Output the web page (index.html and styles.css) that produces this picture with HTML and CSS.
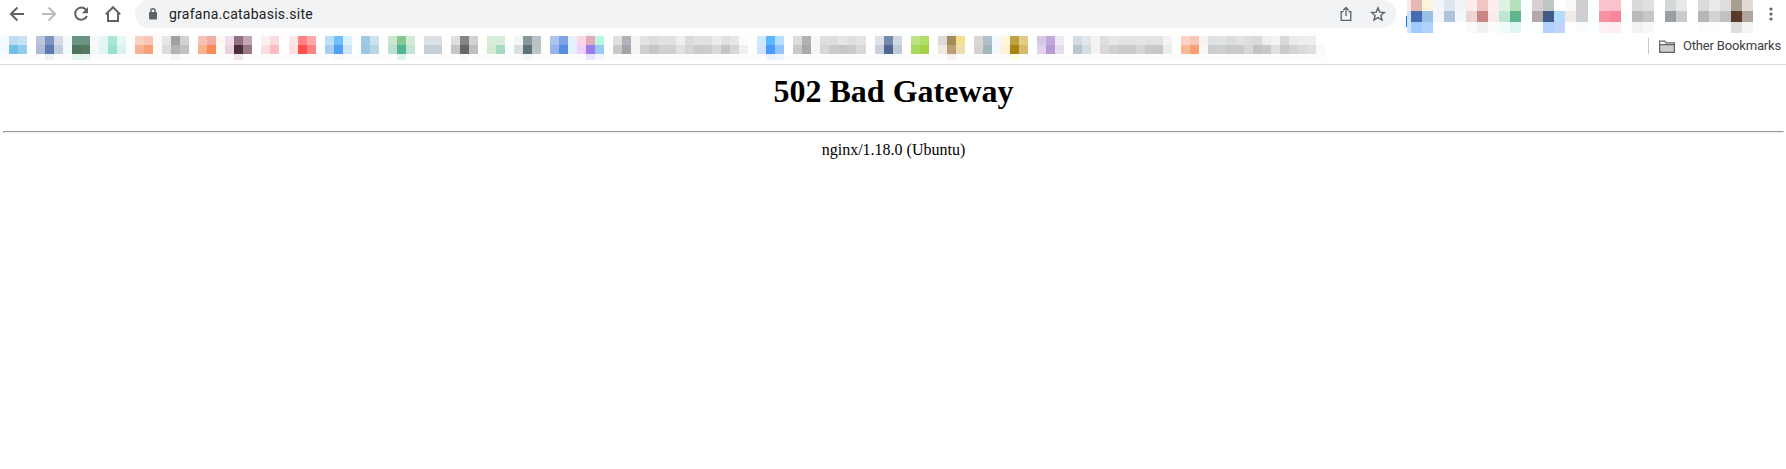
FILE: index.html
```html
<!DOCTYPE html>
<html lang="en">
<head>
<meta charset="utf-8">
<title>502 Bad Gateway</title>
<link rel="stylesheet" href="styles.css">
</head>
<body>
<header class="browser">
  <div class="toolbar">
    <nav class="nav">
      <svg class="icon" viewBox="0 0 20 20"><path d="M17 10H4.2M10.4 3.5L3.9 10l6.5 6.5"/></svg>
      <svg class="icon icon-disabled" viewBox="0 0 20 20"><path d="M3 10h12.8M9.6 3.5l6.5 6.5-6.5 6.5"/></svg>
      <svg class="icon" viewBox="0 0 20 20"><path d="M14.9 5.6A6.1 6.1 0 1 0 15.9 12"/><path class="solid" d="M17 3v6.2h-6.2z"/></svg>
      <svg class="icon" viewBox="0 0 20 20"><path d="M2.8 10.4L10 3.2l7.200 7.200M5 9v8h10V9"/></svg>
    </nav>
    <div class="omnibox">
      <svg class="lock" viewBox="0 0 8 12"><rect x="0" y="4" width="8" height="7.500" rx="1"/><path d="M1.900 4.500V2.900a2.100 2.100 0 0 1 4.200 0v1.600"/></svg>
      <span class="url">grafana.catabasis.site</span>
      <svg class="share" viewBox="0 0 12 16"><path d="M3.500 5.700H1.200v8.600h9.600V5.700H8.500M6 10V1.700M3.300 4.200L6 1.500l2.700 2.700"/></svg>
      <svg class="star" viewBox="0 0 16 16"><path d="M8 1.900l1.800 4.200 4.600.4-3.500 3 1.100 4.500L8 11.600 4 14l1.100-4.500-3.500-3 4.600-.4z"/></svg>
    </div>
    <div class="edge"></div>
    <div class="mosaic mosaic-tools" id="tools"></div>
    <svg class="menu" viewBox="0 0 4 14"><circle cx="2" cy="2" r="1.600"/><circle cx="2" cy="7" r="1.600"/><circle cx="2" cy="12" r="1.600"/></svg>
  </div>
  <div class="bookmarks">
    <div class="mosaic mosaic-marks" id="marks"></div>
    <div class="other">
      <svg class="folder" viewBox="0 0 16 13"><path d="M.6 12V1.100h5l1.300 1.700h8.500V12q0 .4-.4.4H1q-.4 0-.4-.4z"/><path class="front" d="M.6 4.600h14.800V12q0 .4-.4.400H1q-.4 0-.4-.4z"/></svg>
      <span>Other Bookmarks</span>
    </div>
  </div>
</header>
<main class="page">
  <h1>502 Bad Gateway</h1>
  <hr>
  <p>nginx/1.18.0 (Ubuntu)</p>
</main>
<script src="mosaic.js"></script>
</body>
</html>
```
FILE: styles.css
```css
body { margin: 0; background: #fff; }
.toolbar { display: flex; height: 33px; align-items: flex-start; }
.nav { display: flex; gap: 12px; padding: 4px 0 0 7px; width: 128px; box-sizing: border-box; }
.icon { width: 20px; height: 20px; flex: none; fill: none; stroke: #5f6368; stroke-width: 2; }
.icon-disabled { stroke: #babcbe; }
.icon .solid { fill: #5f6368; stroke: none; }
.omnibox { display: flex; align-items: center; box-sizing: border-box; width: 1261px; height: 28px; margin-left: 7px; padding: 0 10px 0 14px; border-radius: 14px; background: #f1f3f4; }
.lock { width: 8px; height: 12px; fill: #5f6368; }
.lock path { fill: none; stroke: #5f6368; stroke-width: 1.400; }
.url { margin-left: 12px; flex: 1; font: 14px/28px Roboto, sans-serif; letter-spacing: .26px; color: #202124; }
.share { width: 12px; height: 16px; margin-right: 18px; fill: none; stroke: #5f6368; stroke-width: 1.300; }
.star { width: 16px; height: 16px; fill: none; stroke: #5f6368; stroke-width: 1.400; }
.edge { flex: none; width: 1px; height: 11px; margin: 16px 0 0 10px; background: #1a73e8; }
.mosaic { display: grid; flex: none; }
.mosaic-tools { width: 346px; grid-template-columns: 4px repeat(31, 11.040px); grid-template-rows: repeat(3, 11px); }
.mosaic-marks { width: 1360px; grid-template-columns: repeat(147, 9.026px); grid-template-rows: 3px 9px 9px 6px; }
.menu { width: 4px; height: 14px; margin: 7px 0 0 16px; fill: #5f6368; }
.bookmarks { display: flex; justify-content: space-between; height: 31px; border-bottom: 1px solid #d8d9db; }
.other { display: flex; align-items: center; height: 16px; margin: 5px 5px 0 0; padding-left: 10px; border-left: 1px solid #c8cacd; font: 13px/16px Roboto, sans-serif; letter-spacing: -.17px; color: #3c4043; }
.folder { width: 16px; height: 13px; margin-right: 8px; fill: #fff; stroke: #5f6368; stroke-width: 1.200; }
.folder .front { fill: #ccc; }
.page { padding: 0 2px 0 3px; font-family: "Liberation Serif", serif; text-align: center; color: #000; }
.page h1 { margin: 8px 0 21px; font-size: 32px; line-height: 37px; }
.page hr { margin: 0; }
.page p { margin: 7px 0 0; font-size: 16px; line-height: 20px; }
```
FILE: mosaic.js
```js
// Each column lists its colours from top to bottom; "-" leaves the column empty.
const toolColumns = `fbe8ee/cfe0f9/cfe3fc e6b7b3/456bb5/9fcaff fbf5de/9bbfe2/b0d0ff f2f6fb/f2f6fb/ffffff dde5ee/b2c4da/ffffff eef3f8/f2f8fc/ffffff fdecec/eed5d4/fbfbfb f0c6c5/ca8684/f2f0f0 fdecec/fbeaec/fcfcfc ddf2e3/bde7d5/f1fbf8 b6dfbc/60b68c/e0f4f2 fbffff/fbffff/ffffff dacfd4/b2a9a8/fcffff bdc8c7/405b89/b0d0ff ffffff/b4dcff/bfd3fb faf8f8/f1ebe6/ffffff cfcdcf/cfcfd2/f8fcff faffff/faffff/faffff fbc2cc/f792a3/fff0f3 fbc2cc/f6869b/ffedf2 ffffff/faffff/ffffff dadada/bcbaba/f2f2f2 e0e0e0/c7c7c7/f8f8f8 - d5d8d9/9a9fa1/ffffff e8eaea/cacbcc/ffffff - d8dadb/b5b6b8/fcfcfc e8ebea/d2d3d5/fdfdfd dcdedb/c1c2be/ffffff a69f92/5b3a2e/dfdedd e0dcd5/b2a59c/f5f5f3`;

const bookmarkColumns = `f4faff/f4faff bbdcf2/73c0e8 c9e2f2/93ccec - bac5df/adbbda 8093c1/5f7ab1 d7dbe9/c4cce2 f1faf9/f1faf9 6b9282/4b745d 6b9282/53795f f4faf9/f4faf9 e4f6f3/e4f6f3 abe6da/9bdfd0 e6f7f4/dbf2ee - fad0c1/f9b18f f8c7b8/f6a179 fffaf8/fffdf8 e5e7e6/dadddc 9fa0a1/b1b3b5 d0d1d3/c1c1c1 - f5c1b6/fab18e f3aca1/f78a5a fff7f4/fffaf6 f0dde9/ead2e0 8f7080/482e37 c4a5b5/967887 - fbf1f1/fbdedf fbdadb/fbbdbe - fde8e9/fde0e1 ff8384/ff4e4c ffa8a9/ff8283 - badffa/a7cff6 70c0fd/4fa0f0 dcf0fe/d0e6fc - 9fcbe2/9ac6df cde2ec/b7d5e5 - cce6d0/b9e0d2 84c990/53b592 d4ebd9/c2e5d5 - dcdfe5/c4cfd7 dcdfe5/c4cfd7 - dfdfdd/c5c5c5 858584/666666 d2d2d2/bfbfbf - daeddd/d3ecd1 daeddd/a3dcc2 ffffff/f8ffff f4f6f6/dbdfe0 87979a/5c7378 b9c3c5/bac5c7 - abc3ef/97b4ec 7fa3e7/588be1 e5f2fe/e5f2fe ffd6e5/f0d2f8 e0adba/9c7dec bbf8e1/9bcaf6 - e0e0e2/c9c9cb b2b2b8/a3a3a9 f4f4f4/f4f4f4 e2e2e2/cfd0d1 dadcdd/c4c5c7 e1e1e1/d0d0d1 e1e1e1/d0d0d1 ecefed/e0e1e0 dbdbda/d5d5d6 e1e1e1/c9cacc e1e1e1/cbccce ebedec/d8d9da e1e1e1/c4c6c5 e6e8e6/d5d7d6 fafdfd/f0f0f2 - cde9ff/d0e2fd 5db6ff/4b9bff b7deff/94c3ff - dcdce0/c9cacf b2b2b5/a7a8ac f6f8f7/f2f6f3 dfdfdf/d7d7d8 dfdfdf/cacaca e4e7e5/c6c7c7 dedede/cacbcb e3e3e4/d8d8d8 - dce1ea/c9cfde 758aab/4e6690 d0d8e4/c0cbd9 - bfe380/a7d85f afdf69/a5d247 - dddbdd/f1e9e3 a48c57/bf9d72 f6df8d/eedcb5 - d6d8d5/d5d3cd b0c1ca/a2b5bc f3f7ff/f3f7ff fff7dc/fdf3d4 bea142/a68313 e2cc86/d6bb6c - d6c7e7/e1d3ee c2a7dd/b799d6 eee7f4/e6dcef - d6dbe1/b9c6ce e1e7eb/d2dfe0 f3f3f3/f3f3f3 dfdfdf/d8d8d8 e6e7e9/cfd0d1 e3e3e3/cacbcd e3e3e3/cacbcd e4e6e4/d5d6d5 e3e3e3/c8caca e3e3e3/c5c7c6 f3f3f3/ececec - fad3c7/f8b995 f9c7b9/f99f71 f9f1ee/f6f9f4 dfe0e1/cacccd e2e4e4/cfd0d0 d9dddc/c9cbcb e1e3e2/cacccb dddedd/d6d8d7 d9dbdb/c3c4c8 eeeeee/c7c9cd f4f4f4/dfe1e1 d8dada/c8cbca e9ebea/d2d4d3 eeeeee/d9dad9 eeeeee/dde0df ffffff/f9f9f9`;

// Faint tints above and below the bookmark icons, keyed by column.
const above = { 8: "f4fffb", 9: "f4fffb", 19: "f8f8f8", 65: "f6f4f4", 105: "f2f2f2" };
const below = { 5: "ecf0f7", 8: "e5f4f1", 9: "e5f4f1", 19: "f4f4f6", 26: "f0e4ea", 37: "f5f9ff", 44: "dff2f2", 51: "f8f8f8", 58: "f4f7f6", 65: "e8e6ff", 66: "f3f6ff", 85: "ebf0ff", 86: "f2f4ff", 105: "f8f0ed", 112: "fffde0" };

function fill(id, columns) {
  const target = document.getElementById(id);
  columns.forEach((colours, x) => colours.forEach((colour, y) => {
    const cell = document.createElement("i");
    cell.style.gridArea = `${y + 1} / ${x + 1}`;
    cell.style.background = "#" + colour;
    target.append(cell);
  }));
}

const parse = text => text.split(" ").map(c => c === "-" ? [] : c.split("/"));
fill("tools", parse(toolColumns));
fill("marks", parse(bookmarkColumns).map((c, x) =>
  [above[x] || "fdfdfd", c[0] || "ffffff", c[1] || "ffffff", below[x] || "fdfdfd"]));
```
